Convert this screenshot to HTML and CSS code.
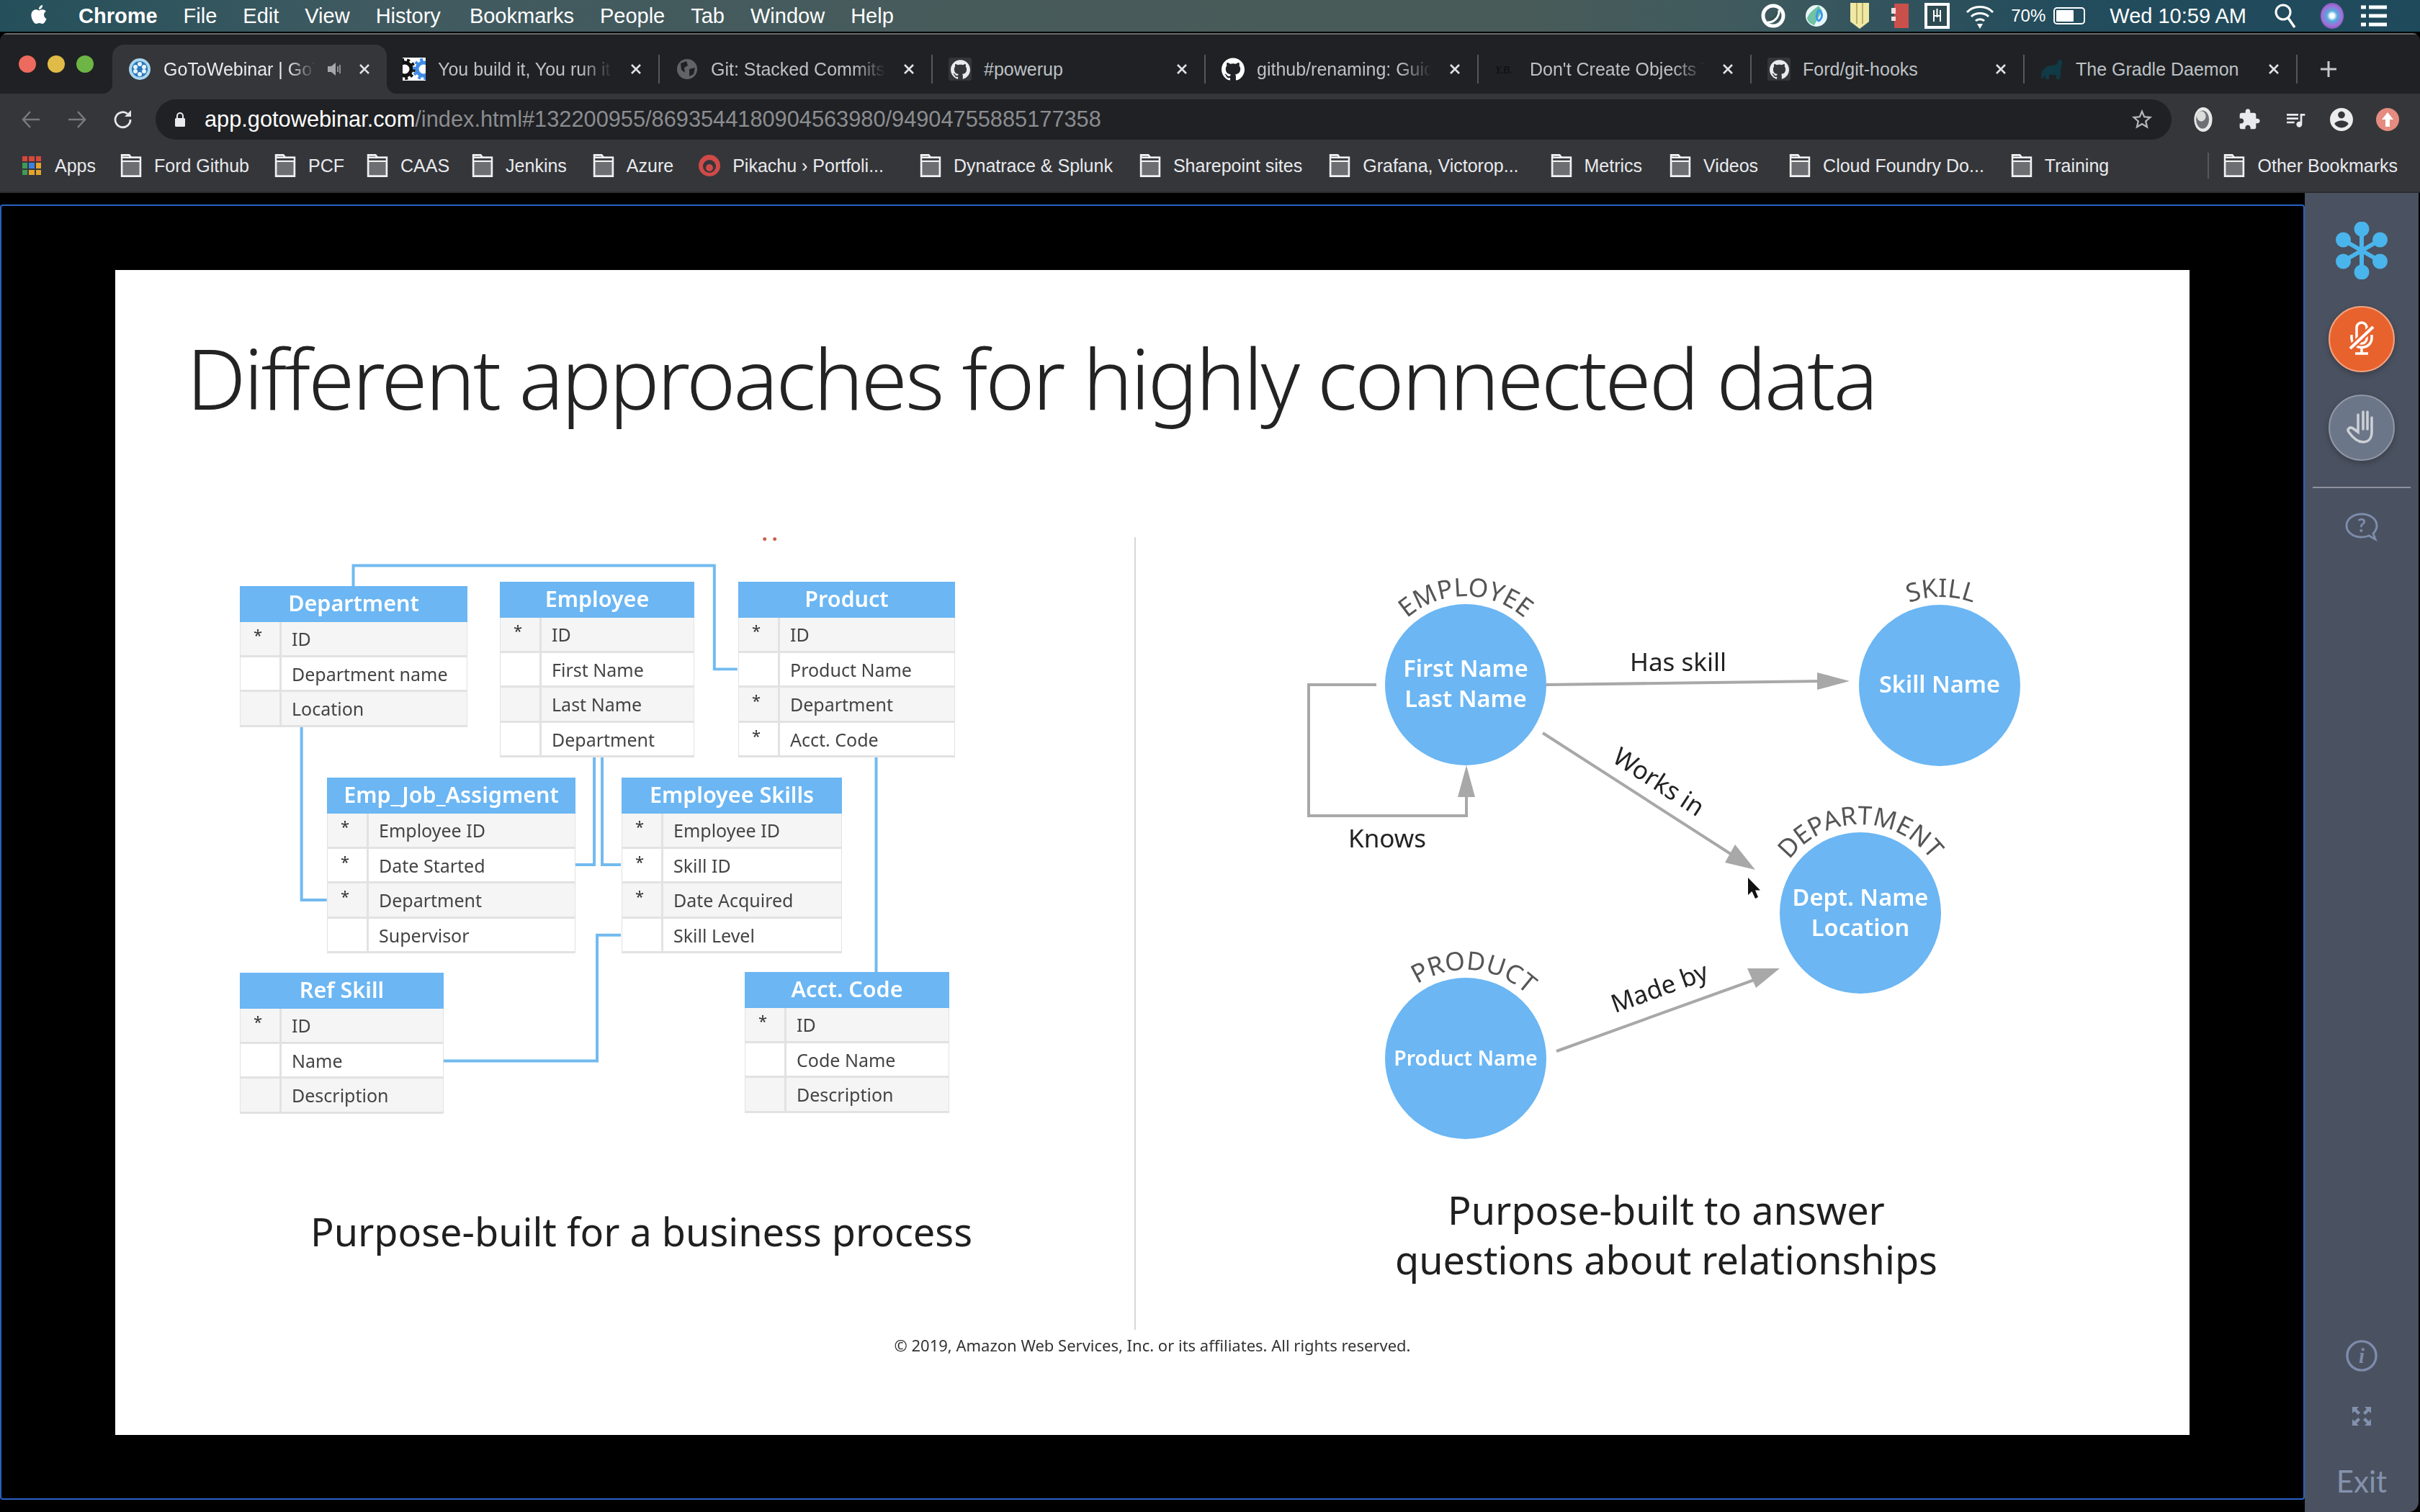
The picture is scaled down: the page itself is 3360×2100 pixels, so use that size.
FILE: index.html
```html
<!DOCTYPE html>
<html lang="en">
<head>
  <meta charset="UTF-8">
  <title>GoToWebinar</title>
  <link rel="stylesheet" href="styles.css">
</head>
<body>
  <svg class="defs" width="0" height="0">
    <symbol id="folder" viewBox="0 0 32 36">
      <path d="M1.5 34.5V1.5H13L16 5.5H30.5V34.5Z" fill="#6d6e71" stroke="#f1f1f1" stroke-width="3"/>
      <path d="M1.5 5.5H30.5V11H1.5Z" fill="#35363a" stroke="#f1f1f1" stroke-width="2.5"/>
    </symbol>
    <symbol id="github" viewBox="0 0 24 24">
      <path fill="currentColor" d="M12 .297c-6.63 0-12 5.373-12 12 0 5.303 3.438 9.8 8.205 11.385.6.113.82-.258.82-.577 0-.285-.01-1.04-.015-2.04-3.338.724-4.042-1.61-4.042-1.61C4.422 18.07 3.633 17.7 3.633 17.7c-1.087-.744.084-.729.084-.729 1.205.084 1.838 1.236 1.838 1.236 1.07 1.835 2.809 1.305 3.495.998.108-.776.417-1.305.76-1.605-2.665-.3-5.466-1.332-5.466-5.93 0-1.31.465-2.38 1.235-3.22-.135-.303-.54-1.523.105-3.176 0 0 1.005-.322 3.3 1.23.96-.267 1.98-.399 3-.405 1.02.006 2.04.138 3 .405 2.28-1.552 3.285-1.23 3.285-1.23.645 1.653.24 2.873.12 3.176.765.84 1.23 1.91 1.23 3.22 0 4.61-2.805 5.625-5.475 5.92.42.36.81 1.096.81 2.22 0 1.606-.015 2.896-.015 3.286 0 .315.21.69.825.57C20.565 22.092 24 17.592 24 12.297c0-6.627-5.373-12-12-12"/>
    </symbol>
    <symbol id="close" viewBox="0 0 16 16">
      <path d="M2 2L14 14M14 2L2 14" stroke="currentColor" stroke-width="2.6" fill="none"/>
    </symbol>
  </svg>

  <!-- mac menu bar -->
  <header class="menubar">
    <svg class="apple" viewBox="0 0 24 24"><path fill="#fff" d="M12.152 6.896c-.948 0-2.415-1.078-3.96-1.04-2.04.027-3.91 1.183-4.961 3.014-2.117 3.675-.546 9.103 1.519 12.09 1.013 1.454 2.208 3.09 3.792 3.039 1.52-.065 2.09-.987 3.935-.987 1.831 0 2.35.987 3.96.948 1.637-.026 2.676-1.48 3.676-2.948 1.156-1.688 1.636-3.325 1.662-3.415-.039-.013-3.182-1.221-3.22-4.857-.026-3.04 2.48-4.494 2.597-4.559-1.429-2.09-3.623-2.324-4.39-2.376-2-.156-3.675 1.09-4.61 1.09zM15.53 3.83c.843-1.012 1.4-2.427 1.245-3.83-1.207.052-2.662.805-3.532 1.818-.78.896-1.454 2.338-1.273 3.714 1.338.104 2.715-.688 3.559-1.701"/></svg>
    <nav class="menu">
      <b>Chrome</b><span>File</span><span>Edit</span><span>View</span><span>History</span><span>Bookmarks</span><span>People</span><span>Tab</span><span>Window</span><span>Help</span>
    </nav>
    <div class="status">
      <svg class="st st1" viewBox="0 0 34 34"><circle cx="17" cy="17" r="14" fill="none" stroke="#fff" stroke-width="5"/><path d="M9 26C17 27 26 19 25 9" fill="none" stroke="#fff" stroke-width="3"/><path d="M12 22C18 22 22 17 22 11" fill="none" stroke="#33504f" stroke-width="2"/></svg>
      <svg class="st st2" viewBox="0 0 34 34"><circle cx="17" cy="17" r="15" fill="#e9f6f7"/><path d="M4 20C9 10 14 8 20 3L25 10L14 30C8 28 5 25 4 20Z" fill="#6fc2a4"/><path d="M20 9C26 12 26 20 20 24C16 22 17 14 20 9Z" fill="none" stroke="#3d9bea" stroke-width="3"/></svg>
      <svg class="st st3" viewBox="0 0 28 38"><path d="M1 1H27V27L14 37L1 27Z" fill="#f1e8a4"/><path d="M10 1V30M18 1V30" stroke="#b9b26a" stroke-width="2"/></svg>
      <svg class="st st4" viewBox="0 0 26 38"><path d="M5 2H25V36H5Z" fill="#c9504b"/><path d="M1 8H7V16H1ZM1 20H7V26H1Z" fill="#f3dcdc"/></svg>
      <svg class="st st5" viewBox="0 0 35 36"><rect width="35" height="36" fill="#fff"/><rect x="4" y="4" width="27" height="28" fill="#2d4a50"/><path d="M13 10V26M22 10V26M13 18H22M17.500 8V20" stroke="#fff" stroke-width="2" fill="none"/></svg>
      <svg class="st st6" viewBox="0 0 42 36"><path d="M3 13C12 3 30 3 39 13M9 19C15 13 27 13 33 19M15 25C18 22 24 22 27 25" fill="none" stroke="#fff" stroke-width="3"/><path d="M21 36L17 29H25Z" fill="#fff"/></svg>
      <span class="st-pct">70%</span>
      <div class="battery"><i></i></div>
      <span class="st-clock">Wed 10:59 AM</span>
      <svg class="st st7" viewBox="0 0 30 34"><circle cx="12" cy="12" r="10" fill="none" stroke="#fff" stroke-width="3"/><path d="M19 20L28 33" stroke="#fff" stroke-width="3.4"/></svg>
      <div class="siri"></div>
      <svg class="st st8" viewBox="0 0 38 30"><path d="M1 3H8M12 3H37M1 15H8M12 15H37M1 27H8M12 27H37" stroke="#fff" stroke-width="5"/></svg>
    </div>
  </header>

  <div class="window">
    <div class="tabstrip">
      <div class="lights"><i class="red"></i><i class="yellow"></i><i class="green"></i></div>

      <div class="tab active">
        <svg class="fav" viewBox="0 0 32 32"><circle cx="16" cy="16" r="15" fill="#a9d6ee"/><circle cx="16" cy="16" r="11" fill="#2a78bb"/><g fill="#e6f3fa"><circle cx="16" cy="9" r="3"/><circle cx="16" cy="23" r="3"/><circle cx="10" cy="13" r="3"/><circle cx="22" cy="13" r="3"/><circle cx="10" cy="19" r="3"/><circle cx="22" cy="19" r="3"/></g></svg>
        <span class="tab-title short">GoToWebinar | GoT</span>
        <svg class="speaker" viewBox="0 0 20 24"><path d="M1 8H6L12 3V21L6 16H1Z" fill="#a5a7aa"/><path d="M15 8V16M18 6V18" stroke="#a5a7aa" stroke-width="1.6"/></svg>
        <svg class="tab-x"><use href="#close"/></svg>
      </div>
      <div class="tab">
        <svg class="fav" viewBox="0 0 32 32"><rect width="32" height="32" fill="#fff"/><circle cx="3" cy="16" r="9" fill="none" stroke="#111" stroke-width="5"/><circle cx="3" cy="16" r="13" fill="none" stroke="#111" stroke-width="4" stroke-dasharray="4 4"/><circle cx="29" cy="16" r="9" fill="none" stroke="#3f8be8" stroke-width="5"/><circle cx="29" cy="16" r="13" fill="none" stroke="#3f8be8" stroke-width="4" stroke-dasharray="4 4"/></svg>
        <span class="tab-title">You build it, You run it</span>
        <svg class="tab-x"><use href="#close"/></svg>
      </div>
      <i class="tab-sep"></i>
      <div class="tab">
        <svg class="fav" viewBox="0 0 32 32"><circle cx="16" cy="16" r="14" fill="#606367"/><path d="M7 8L15 5L17 11L12 14L13 21L8 17ZM19 16L27 14L25 23L19 26Z" fill="#202124"/></svg>
        <span class="tab-title">Git: Stacked Commits</span>
        <svg class="tab-x"><use href="#close"/></svg>
      </div>
      <i class="tab-sep"></i>
      <div class="tab">
        <span class="fav gh-box"><svg><use href="#github"/></svg></span>
        <span class="tab-title plain">#powerup</span>
        <svg class="tab-x"><use href="#close"/></svg>
      </div>
      <i class="tab-sep"></i>
      <div class="tab">
        <svg class="fav gh"><use href="#github"/></svg>
        <span class="tab-title">github/renaming: Guid</span>
        <svg class="tab-x"><use href="#close"/></svg>
      </div>
      <i class="tab-sep"></i>
      <div class="tab">
        <svg class="fav" viewBox="0 0 32 32"><text class="yb" x="1" y="22">Y.B.</text></svg>
        <span class="tab-title">Don't Create Objects T</span>
        <svg class="tab-x"><use href="#close"/></svg>
      </div>
      <i class="tab-sep"></i>
      <div class="tab">
        <span class="fav gh-box"><svg><use href="#github"/></svg></span>
        <span class="tab-title plain">Ford/git-hooks</span>
        <svg class="tab-x"><use href="#close"/></svg>
      </div>
      <i class="tab-sep"></i>
      <div class="tab">
        <svg class="fav" viewBox="0 0 32 32"><path d="M1 30C0 18 6 11 16 11C21 11 24 8 25 3C30 2 32 7 29 11C28 20 28 26 27 30H22V24H12V30H7V25C5 26 3 28 1 30Z" fill="#0f3a46"/></svg>
        <span class="tab-title plain">The Gradle Daemon</span>
        <svg class="tab-x"><use href="#close"/></svg>
      </div>
      <i class="tab-sep"></i>
      <svg class="tab-new" viewBox="0 0 24 24"><path d="M12 1V23M1 12H23" stroke="#c6c8cb" stroke-width="3"/></svg>
    </div>

    <div class="toolbar">
      <button class="nav-btn"><svg viewBox="0 0 28 28"><path d="M26 14H3M13 3L3 14L13 25" fill="none" stroke="#77797d" stroke-width="2.6"/></svg></button>
      <button class="nav-btn"><svg viewBox="0 0 28 28"><path d="M2 14H25M15 3L25 14L15 25" fill="none" stroke="#77797d" stroke-width="2.6"/></svg></button>
      <button class="nav-btn"><svg viewBox="0 0 28 28"><path d="M24 14A10.500 10.500 0 1 1 20 6" fill="none" stroke="#e4e6e8" stroke-width="2.8"/><path d="M25 1V10H16Z" fill="#e4e6e8"/></svg></button>
      <div class="omnibox">
        <svg class="lock" viewBox="0 0 16 22"><path d="M4 9V6A4 4 0 0 1 12 6V9" fill="none" stroke="#e8eaed" stroke-width="2"/><rect x="1" y="9" width="14" height="12" rx="1.500" fill="#e8eaed"/></svg>
        <span class="url"><b>app.gotowebinar.com</b>/index.html#132200955/8693544180904563980/94904755885177358</span>
        <svg class="star" viewBox="0 0 24 24"><path fill="#b4b6b9" d="M22 9.24l-7.19-.62L12 2 9.19 8.63 2 9.24l5.46 4.730L5.820 21 12 17.270 18.180 21l-1.630-7.030L22 9.240zM12 15.400l-3.760 2.270 1-4.280-3.320-2.880 4.380-.38L12 6.100l1.710 4.040 4.380.38-3.320 2.880 1 4.280L12 15.400z"/></svg>
      </div>
      <div class="tool-icons">
        <svg viewBox="0 0 32 40"><ellipse cx="16" cy="20" rx="14" ry="19" fill="#e8e8e8"/><ellipse cx="15" cy="20" rx="10" ry="14" fill="#6f7073"/><ellipse cx="13" cy="15" rx="7" ry="8" fill="#dcdcdc"/></svg>
        <svg viewBox="0 0 24 24"><path fill="#e8eaed" d="M20.500 11H19V7c0-1.100-.9-2-2-2h-4V3.500C13 2.120 11.880 1 10.500 1S8 2.120 8 3.500V5H4c-1.100 0-1.990.9-1.990 2v3.800H3.500c1.490 0 2.700 1.210 2.700 2.700s-1.210 2.700-2.700 2.700H2V20c0 1.100.9 2 2 2h3.800v-1.500c0-1.490 1.210-2.700 2.700-2.700 1.490 0 2.700 1.210 2.700 2.700V22H17c1.100 0 2-.9 2-2v-4h1.500c1.380 0 2.500-1.120 2.500-2.500S21.880 11 20.500 11z"/></svg>
        <svg viewBox="0 0 24 24"><path fill="#e8eaed" d="M15 6H3v2h12V6zm0 4H3v2h12v-2zM3 16h8v-2H3v2zM17 6v8.180c-.31-.11-.65-.18-1-.18-1.660 0-3 1.340-3 3s1.340 3 3 3 3-1.340 3-3V8h3V6h-5z"/></svg>
        <svg viewBox="2 2 20 20" class="avatar"><path fill="#ececec" d="M12 2C6.480 2 2 6.480 2 12s4.480 10 10 10 10-4.480 10-10S17.520 2 12 2zm0 3c1.660 0 3 1.340 3 3s-1.340 3-3 3-3-1.340-3-3 1.340-3 3-3zm0 14.200c-2.500 0-4.710-1.280-6-3.220.03-1.990 4-3.080 6-3.080 1.990 0 5.970 1.090 6 3.080-1.290 1.940-3.500 3.220-6 3.220z"/></svg>
        <svg viewBox="0 0 32 32" class="update"><circle cx="16" cy="16" r="16" fill="#e58b80"/><path d="M16 6L24 16H19V26H13V16H8Z" fill="#fff"/></svg>
      </div>
    </div>

    <div class="bookmarks">
      <div class="bm">
        <div class="apps-grid"><i class="r"></i><i class="r"></i><i class="r"></i><i class="g"></i><i class="b"></i><i class="y"></i><i class="g"></i><i class="y"></i><i class="y"></i></div>
        <span>Apps</span>
      </div>
      <div class="bm"><svg class="folder"><use href="#folder"/></svg><span>Ford Github</span></div>
      <div class="bm"><svg class="folder"><use href="#folder"/></svg><span>PCF</span></div>
      <div class="bm"><svg class="folder"><use href="#folder"/></svg><span>CAAS</span></div>
      <div class="bm"><svg class="folder"><use href="#folder"/></svg><span>Jenkins</span></div>
      <div class="bm"><svg class="folder"><use href="#folder"/></svg><span>Azure</span></div>
      <div class="bm">
        <svg class="folder" viewBox="0 0 32 32"><circle cx="16" cy="16" r="15" fill="#cf4a48"/><circle cx="16" cy="17" r="9" fill="#35363a"/><circle cx="16" cy="19" r="5" fill="#cf4a48"/></svg>
        <span>Pikachu › Portfoli...</span>
      </div>
      <div class="bm"><svg class="folder"><use href="#folder"/></svg><span>Dynatrace &amp; Splunk</span></div>
      <div class="bm"><svg class="folder"><use href="#folder"/></svg><span>Sharepoint sites</span></div>
      <div class="bm"><svg class="folder"><use href="#folder"/></svg><span>Grafana, Victorop...</span></div>
      <div class="bm"><svg class="folder"><use href="#folder"/></svg><span>Metrics</span></div>
      <div class="bm"><svg class="folder"><use href="#folder"/></svg><span>Videos</span></div>
      <div class="bm"><svg class="folder"><use href="#folder"/></svg><span>Cloud Foundry Do...</span></div>
      <div class="bm"><svg class="folder"><use href="#folder"/></svg><span>Training</span></div>
      <div class="bm other"><svg class="folder"><use href="#folder"/></svg><span>Other Bookmarks</span></div>
    </div>

    <div class="webinar">
      <main class="stage">
        <section class="slide">
          <h1>Different approaches for highly connected data</h1>
          <div class="panels">
            <div class="panel">
              <div class="canvas left-canvas">
                <svg class="lines" viewBox="160 746 1417 900">
                  <g class="conn">
                    <path d="M491 814V785H993V929H1025"/>
                    <path d="M419 1009V1250H454"/>
                    <path d="M826 1051V1201H799"/>
                    <path d="M837 1051V1201H863"/>
                    <path d="M1218 1049V1351"/>
                    <path d="M616 1474H830V1299H863"/>
                  </g>
                  <circle class="speck" cx="1063" cy="748" r="2.500"/>
                  <circle class="speck" cx="1077" cy="748" r="2.500"/>
                </svg>

                <div class="tbl t-dept">
                  <div class="tbl-head">Department</div>
                  <div class="tbl-row"><span class="key">*</span><span class="col">ID</span></div>
                  <div class="tbl-row"><span class="key"></span><span class="col">Department name</span></div>
                  <div class="tbl-row"><span class="key"></span><span class="col">Location</span></div>
                </div>
                <div class="tbl t-emp">
                  <div class="tbl-head">Employee</div>
                  <div class="tbl-row"><span class="key">*</span><span class="col">ID</span></div>
                  <div class="tbl-row"><span class="key"></span><span class="col">First Name</span></div>
                  <div class="tbl-row"><span class="key"></span><span class="col">Last Name</span></div>
                  <div class="tbl-row"><span class="key"></span><span class="col">Department</span></div>
                </div>
                <div class="tbl t-prod">
                  <div class="tbl-head">Product</div>
                  <div class="tbl-row"><span class="key">*</span><span class="col">ID</span></div>
                  <div class="tbl-row"><span class="key"></span><span class="col">Product Name</span></div>
                  <div class="tbl-row"><span class="key">*</span><span class="col">Department</span></div>
                  <div class="tbl-row"><span class="key">*</span><span class="col">Acct. Code</span></div>
                </div>
                <div class="tbl t-job">
                  <div class="tbl-head">Emp_Job_Assigment</div>
                  <div class="tbl-row"><span class="key">*</span><span class="col">Employee ID</span></div>
                  <div class="tbl-row"><span class="key">*</span><span class="col">Date Started</span></div>
                  <div class="tbl-row"><span class="key">*</span><span class="col">Department</span></div>
                  <div class="tbl-row"><span class="key"></span><span class="col">Supervisor</span></div>
                </div>
                <div class="tbl t-skills">
                  <div class="tbl-head">Employee Skills</div>
                  <div class="tbl-row"><span class="key">*</span><span class="col">Employee ID</span></div>
                  <div class="tbl-row"><span class="key">*</span><span class="col">Skill ID</span></div>
                  <div class="tbl-row"><span class="key">*</span><span class="col">Date Acquired</span></div>
                  <div class="tbl-row"><span class="key"></span><span class="col">Skill Level</span></div>
                </div>
                <div class="tbl t-ref">
                  <div class="tbl-head">Ref Skill</div>
                  <div class="tbl-row"><span class="key">*</span><span class="col">ID</span></div>
                  <div class="tbl-row"><span class="key"></span><span class="col">Name</span></div>
                  <div class="tbl-row"><span class="key"></span><span class="col">Description</span></div>
                </div>
                <div class="tbl t-acct">
                  <div class="tbl-head">Acct. Code</div>
                  <div class="tbl-row"><span class="key">*</span><span class="col">ID</span></div>
                  <div class="tbl-row"><span class="key"></span><span class="col">Code Name</span></div>
                  <div class="tbl-row"><span class="key"></span><span class="col">Description</span></div>
                </div>
              </div>
              <p class="caption left-caption">Purpose-built for a business process</p>
            </div>

            <div class="panel right-panel">
              <div class="canvas">
                <svg class="lines" viewBox="1577 746 1461 900">
                  <defs>
                    <path id="arc-emp" d="M1911 951A123 123 0 0 1 2157 951"/>
                    <path id="arc-skill" d="M2571 952A123 123 0 0 1 2817 952"/>
                    <path id="arc-dept" d="M2459 1268A123 123 0 0 1 2705 1268"/>
                    <path id="arc-prod" d="M1911 1470A123 123 0 0 1 2157 1470"/>
                  </defs>
                  <g class="edge">
                    <path d="M2146 951L2530 946"/>
                    <path d="M1910 951H1816V1133H2035V1100"/>
                    <path d="M2141 1018L2405 1188"/>
                    <path d="M2160 1460L2440 1359"/>
                  </g>
                  <g class="head">
                    <path d="M2567 946L2522 934V958Z"/>
                    <path d="M2035 1063L2023 1107H2047Z"/>
                    <path d="M2436 1208L2394 1198L2408 1173Z"/>
                    <path d="M2470 1345L2437 1372L2425 1345Z"/>
                  </g>
                  <circle class="node" cx="2034" cy="951" r="112"/>
                  <circle class="node" cx="2692" cy="952" r="112"/>
                  <circle class="node" cx="2582" cy="1268" r="112"/>
                  <circle class="node" cx="2034" cy="1470" r="112"/>

                  <text class="arc-label"><textPath href="#arc-emp" startOffset="50%">EMPLOYEE</textPath></text>
                  <text class="arc-label"><textPath href="#arc-skill" startOffset="50%">SKILL</textPath></text>
                  <text class="arc-label"><textPath href="#arc-dept" startOffset="50%">DEPARTMENT</textPath></text>
                  <text class="arc-label"><textPath href="#arc-prod" startOffset="53%">PRODUCT</textPath></text>

                  <text class="node-text" x="2034" y="940">First Name</text>
                  <text class="node-text" x="2034" y="982">Last Name</text>
                  <text class="node-text" x="2692" y="962">Skill Name</text>
                  <text class="node-text" x="2582" y="1258">Dept. Name</text>
                  <text class="node-text" x="2582" y="1300">Location</text>
                  <text class="node-text small" x="2034" y="1480">Product Name</text>

                  <text class="edge-label" x="2329" y="932">Has skill</text>
                  <text class="edge-label" x="1925" y="1177">Knows</text>
                  <text class="edge-label" transform="translate(2302 1086) rotate(33)" y="12">Works in</text>
                  <text class="edge-label" transform="translate(2303 1372) rotate(-20)" y="12">Made by</text>

                  <path class="pointer" d="M2426 1219V1243L2431.500 1238L2436 1248L2440 1246L2436 1236.500H2443Z"/>
                </svg>
              </div>
              <p class="caption">Purpose-built to answer<br>questions about relationships</p>
            </div>
          </div>
          <p class="legal">© 2019, Amazon Web Services, Inc. or its affiliates. All rights reserved.</p>
        </section>
      </main>

      <aside class="sidebar">
        <svg class="logo" viewBox="0 0 72 80">
          <g stroke="#4ab5ec" stroke-width="6"><path d="M36 10V70M10 25L62 55M62 25L10 55"/></g>
          <g fill="#4ab5ec"><circle cx="36" cy="10" r="10.500"/><circle cx="36" cy="70" r="10.500"/><circle cx="10.500" cy="25" r="10.500"/><circle cx="61.500" cy="25" r="10.500"/><circle cx="10.500" cy="55" r="10.500"/><circle cx="61.500" cy="55" r="10.500"/></g>
        </svg>
        <button class="round mic">
          <svg viewBox="-30 -30 60 60">
            <rect x="-7" y="-23" width="14" height="29" rx="7" fill="none" stroke="#fff" stroke-width="3.500"/>
            <path d="M-14 -6V-2C-14 16 14 16 14 -2V-6M0 12V19M-9 20H9" fill="none" stroke="#fff" stroke-width="3.500"/>
            <path d="M-16 13L16 -17" stroke="#e8622e" stroke-width="9"/>
            <path d="M-16 13L16 -17" stroke="#fff" stroke-width="4"/>
          </svg>
        </button>
        <button class="round hand">
          <svg viewBox="-30 -30 60 60">
            <path d="M-5 -18V6L-12 1C-16 -2 -21 2 -18 6C-13 13 -7 20 2 20C10 20 14 14 14 6V-14M2 -22V2M8 -22V2" fill="none" stroke="#cdd0d5" stroke-width="3.500" stroke-linecap="round"/>
          </svg>
        </button>
        <hr class="side-line">
        <svg class="help" viewBox="0 0 46 40">
          <path d="M23 2C11 2 2 9 2 18C2 27 11 34 23 34C27 34 31 33 33 32L42 37L39 29C42 26 44 22 44 18C44 9 35 2 23 2Z" fill="none" stroke="#7d8cab" stroke-width="3"/>
          <text class="help-mark" x="23" y="27">?</text>
        </svg>
        <svg class="info" viewBox="0 0 46 46">
          <circle cx="23" cy="23" r="21" fill="none" stroke="#7d8cab" stroke-width="3.500"/>
          <text class="info-mark" x="23" y="33">i</text>
        </svg>
        <svg class="expand" viewBox="0 0 30 30">
          <path d="M2 2H11L8 5L13 10L10 13L5 8L2 11ZM28 2H19L22 5L17 10L20 13L25 8L28 11ZM2 28H11L8 25L13 20L10 17L5 22L2 19ZM28 28H19L22 25L17 20L20 17L25 22L28 19Z" fill="#8292ae"/>
        </svg>
        <span class="exit">Exit</span>
      </aside>
    </div>
  </div>
</body>
</html>
```

FILE: styles.css
```css
* {
  box-sizing: border-box;
}
html, body {
  margin: 0;
  padding: 0;
}
body {
  width: 3360px;
  height: 2100px;
  overflow: hidden;
  background: #000;
  font-family: 'Liberation Sans', sans-serif;
  display: flex;
  flex-direction: column;
}
.defs {
  position: absolute;
}

/* menu bar */
.menubar {
  height: 44px;
  flex: none;
  display: flex;
  align-items: center;
  color: #fff;
  font-size: 29px;
  background: linear-gradient(90deg, #24505b 0%, #3f5a60 15%, #485b5b 40%, #495b58 62%, #3f5a5e 72%, #234c5c 85%, #1f4a5c 100%);
  padding: 0 45px 0 41px;
}
.apple {
  width: 26px;
  height: 30px;
  margin-top: -4px;
}
.menu {
  display: flex;
  gap: 36px;
  margin-left: 42px;
}
.menu b {
  font-weight: 700;
}
.menu span:nth-child(5) {
  margin-right: 4px;
}
.status {
  margin-left: auto;
  display: flex;
  align-items: center;
  height: 100%;
}
.st {
  flex: none;
  height: 34px;
}
.st1 { width: 34px; }
.st2 { width: 34px; margin-left: 26px; }
.st3 { width: 28px; height: 38px; margin-left: 29px; }
.st4 { width: 26px; height: 38px; margin-left: 29px; }
.st5 { width: 35px; height: 36px; margin-left: 21px; }
.st6 { width: 42px; height: 36px; margin-left: 21px; }
.st-pct {
  font-size: 24px;
  margin-left: 22px;
}
.battery {
  width: 44px;
  height: 24px;
  margin-left: 11px;
  border: 2px solid #fff;
  border-radius: 5px;
  padding: 2px;
}
.battery i {
  display: block;
  width: 65%;
  height: 100%;
  background: #fff;
  border-radius: 1px;
}
.st-clock {
  margin-left: 34px;
  white-space: nowrap;
}
.st7 { width: 30px; margin-left: 39px; }
.siri {
  width: 32px;
  height: 36px;
  margin-left: 34px;
  border-radius: 50%;
  background: radial-gradient(circle at 50% 50%, #fff 0 12%, #5ad 30%, #a56ad8 60%, #334a86 100%);
}
.st8 { width: 38px; height: 30px; margin-left: 23px; }

/* browser window */
.window {
  flex: 1;
  margin-top: 2px;
  display: flex;
  flex-direction: column;
  border-radius: 10px 10px 0 0;
  overflow: hidden;
  min-height: 0;
}
.tabstrip {
  height: 84px;
  flex: none;
  background: #202124;
  border-top: 2px solid #6a6a6a;
  padding: 14px 0 0 26px;
  display: flex;
  align-items: center;
}
.lights {
  display: flex;
  gap: 16px;
  width: 130px;
  margin-bottom: 14px;
}
.lights i {
  width: 24px;
  height: 24px;
  border-radius: 50%;
}
.lights .red { background: #ec6a5e; }
.lights .yellow { background: #e0bb47; }
.lights .green { background: #6db544; }
.tab {
  width: 377px;
  height: 68px;
  flex: none;
  display: flex;
  align-items: center;
  padding: 0 23px 0 22px;
  color: #bdc1c6;
  font-size: 25px;
  position: relative;
}
.tab.active {
  width: 381px;
  background: #35363a;
  border-radius: 16px 16px 0 0;
  color: #e8eaed;
}
.tab.active::before,
.tab.active::after {
  content: "";
  position: absolute;
  bottom: 0;
  width: 14px;
  height: 14px;
}
.tab.active::before {
  left: -14px;
  background: radial-gradient(circle at 0 0, transparent 14px, #35363a 14.500px);
}
.tab.active::after {
  right: -14px;
  background: radial-gradient(circle at 100% 0, transparent 14px, #35363a 14.500px);
}
.tab-sep {
  flex: none;
  width: 2px;
  height: 40px;
  background: #56575b;
}
.fav {
  width: 32px;
  height: 32px;
  flex: none;
}
.fav.gh {
  color: #fff;
}
.gh-box {
  background: #35363a;
  border-radius: 3px;
  display: flex;
  align-items: center;
  justify-content: center;
  color: #e8eaed;
}
.gh-box svg {
  width: 27px;
  height: 27px;
}
.yb {
  font-family: 'Liberation Serif', serif;
  font-size: 15px;
  font-style: italic;
  fill: #0c0c0d;
}
.tab-title {
  flex: 1;
  min-width: 0;
  margin: 0 24px 0 17px;
  white-space: nowrap;
  -webkit-mask-image: linear-gradient(90deg, #000 82%, transparent 100%);
  mask-image: linear-gradient(90deg, #000 82%, transparent 100%);
}
.tab-title.plain {
  -webkit-mask-image: none;
  mask-image: none;
}
.tab-title.short {
  margin-right: 16px;
}
.speaker {
  width: 20px;
  height: 24px;
  flex: none;
  margin-right: 24px;
}
.tab-x {
  width: 16px;
  height: 16px;
  flex: none;
  color: #e0e2e4;
}
.tab-new {
  width: 24px;
  height: 24px;
  margin-left: 31px;
}

/* toolbar */
.toolbar {
  height: 64px;
  flex: none;
  background: #35363a;
  padding: 8px 13px 0 11px;
  display: flex;
  align-items: center;
}
.nav-btn {
  width: 64px;
  height: 56px;
  flex: none;
  padding: 0;
  border: 0;
  background: none;
  display: flex;
  align-items: center;
  justify-content: center;
}
.nav-btn svg {
  width: 28px;
  height: 28px;
}
.omnibox {
  flex: 1;
  height: 56px;
  margin: 0 12px 0 13px;
  background: #202124;
  border-radius: 28px;
  display: flex;
  align-items: center;
  padding: 0 24px 0 26px;
}
.lock {
  width: 16px;
  height: 22px;
}
.url {
  margin-left: 26px;
  font-size: 30.750px;
  color: #8b8d91;
  white-space: nowrap;
}
.url b {
  font-weight: 400;
  color: #fff;
}
.star {
  width: 34px;
  height: 34px;
  margin-left: auto;
}
.tool-icons {
  display: flex;
  align-items: center;
  gap: 32px;
  width: 320px;
  padding-left: 16px;
}
.tool-icons svg {
  width: 32px;
  height: 36px;
  flex: none;
}

/* bookmarks */
.bookmarks {
  height: 74px;
  flex: none;
  background: #35363a;
  display: flex;
  align-items: center;
  gap: 34px;
  padding: 0 31px 0 31px;
  color: #e8eaed;
  font-size: 25px;
  border-bottom: 2px solid #2b2c2f;
}
.bm {
  display: flex;
  align-items: center;
  gap: 16px;
  white-space: nowrap;
}
/* the originals sit in wider slots than the text needs here */
.bm:nth-child(2) { margin-left: -1px; }
.bm:nth-child(4) { margin-left: -4px; }
.bm:nth-child(5) { margin-left: -4px; }
.bm:nth-child(6) { margin-left: 1px; }
.bm:nth-child(8) { margin-left: 15px; }
.bm:nth-child(9) { margin-left: 2px; }
.bm:nth-child(10) { margin-left: 2px; }
.bm:nth-child(11) { margin-left: 9px; }
.bm:nth-child(12) { margin-left: 3px; }
.bm:nth-child(13) { margin-left: 8px; }
.bm:nth-child(14) { margin-left: 2px; }
.bm.other {
  margin-left: auto;
  position: relative;
}
.bm.other::before {
  content: "";
  position: absolute;
  left: -21px;
  top: -2px;
  width: 2px;
  height: 36px;
  background: #56575b;
}
.folder {
  width: 32px;
  height: 32px;
  flex: none;
}
.apps-grid {
  width: 26px;
  height: 27px;
  display: grid;
  grid-template-columns: repeat(3, 1fr);
  grid-template-rows: repeat(3, 1fr);
  gap: 2px;
  margin-right: 3px;
}
.apps-grid .r { background: #d8483c; }
.apps-grid .g { background: #3f9a56; }
.apps-grid .b { background: #3f7fe0; }
.apps-grid .y { background: #e3a32d; }

/* webinar area */
.webinar {
  flex: 1;
  display: flex;
  min-height: 0;
  background: #000;
}
.stage {
  width: 3200px;
  height: 1799px;
  margin-top: 16px;
  flex: none;
  border: 2px solid #2a62c4;
  border-radius: 4px;
  padding: 89px 0 0 158px;
}
.sidebar {
  width: 158px;
  flex: none;
  background: #4a5160;
  border-radius: 0 0 14px 0;
  display: flex;
  flex-direction: column;
  align-items: center;
}
.logo {
  width: 72px;
  height: 80px;
  margin-top: 40px;
}
.round {
  width: 92px;
  height: 92px;
  padding: 0;
  border-radius: 50%;
  display: flex;
  align-items: center;
  justify-content: center;
  box-shadow: 0 3px 8px rgba(0,0,0,0.25);
}
.round svg {
  width: 60px;
  height: 60px;
}
.mic {
  margin-top: 37px;
  background: #e8622e;
  border: 2px solid #f3a27e;
}
.hand {
  margin-top: 31px;
  background: #6b7688;
  border: 2px solid #8f97a5;
}
.side-line {
  width: 136px;
  height: 2px;
  margin: 36px 0 0;
  border: 0;
  background: #8e93a0;
}
.help {
  width: 46px;
  height: 40px;
  margin-top: 34px;
}
.help-mark {
  font-family: 'Lato', sans-serif;
  font-size: 26px;
  font-weight: 700;
  fill: #7d8cab;
  text-anchor: middle;
}
.info {
  width: 44px;
  height: 44px;
  margin-top: auto;
}
.info-mark {
  font-family: 'Liberation Serif', serif;
  font-size: 30px;
  font-weight: 700;
  font-style: italic;
  fill: #7d8cab;
  text-anchor: middle;
}
.expand {
  width: 30px;
  height: 30px;
  margin-top: 47px;
}
.exit {
  font-family: 'Lato', sans-serif;
  font-size: 42px;
  line-height: 50px;
  color: #8492ad;
  margin: 50px 0 18px;
}

/* slide */
.slide {
  width: 2880px;
  height: 1618px;
  background: #fff;
  display: flex;
  flex-direction: column;
  font-family: 'Noto Sans', sans-serif;
  color: #222;
  filter: blur(0.7px);
}
.slide h1 {
  margin: 0;
  height: 371px;
  padding: 79px 0 0 99px;
  font-size: 116px;
  line-height: 140px;
  font-weight: 300;
  letter-spacing: -3px;
  white-space: nowrap;
  color: #232323;
}
.panels {
  height: 1101px;
  flex: none;
  display: grid;
  grid-template-columns: 1417px 1fr;
}
.panel {
  border-right: 2px solid #d8d8d8;
}
.right-panel {
  border-right: 0;
}
.canvas {
  position: relative;
  height: 900px;
}
.lines {
  position: absolute;
  left: 0;
  top: 0;
  width: 100%;
  height: 100%;
}
.caption {
  margin: 0;
  font-size: 54px;
  line-height: 69px;
  text-align: center;
  color: #1f1f1f;
}
.left-caption {
  margin-top: 30px;
  padding-left: 46px;
}
.right-panel .caption {
  padding-left: 10px;
}
.legal {
  margin: 6px 0 0;
  font-size: 22px;
  line-height: 30px;
  text-align: center;
  color: #333;
}

/* er tables */
.tbl {
  position: absolute;
  display: grid;
  grid-template-rows: 50px;
  grid-auto-rows: 48.500px;
}
.t-dept { left: 173px; top: 68px; width: 316px; }
.t-emp { left: 534px; top: 62px; width: 270px; }
.t-prod { left: 865px; top: 62px; width: 301px; }
.t-job { left: 294px; top: 334px; width: 345px; }
.t-skills { left: 703px; top: 334px; width: 306px; }
.t-ref { left: 173px; top: 605px; width: 283px; }
.t-acct { left: 874px; top: 604px; width: 284px; }
.tbl-head {
  background: #6bb6f3;
  color: #fff;
  font-size: 30.500px;
  font-weight: 600;
  line-height: 47px;
  text-align: center;
}
.tbl-row {
  display: flex;
  background: #fff;
  color: #444;
  font-size: 25px;
  line-height: 46px;
  border: 1.500px solid #e2e2e2;
  border-top: 0;
  border-bottom-width: 3px;
}
.tbl-row:nth-child(even) {
  background: #f5f5f5;
}
.key {
  width: 57px;
  flex: none;
  border-right: 3px solid #e2e2e2;
  padding-left: 18px;
  font-size: 22px;
  line-height: 34px;
  color: #333;
}
.col {
  padding-left: 14px;
  white-space: nowrap;
}

/* connector and graph drawing */
.conn path {
  fill: none;
  stroke: #72baf0;
  stroke-width: 4;
}
.speck {
  fill: #c8604a;
}
.edge path {
  fill: none;
  stroke: #a8a8a8;
  stroke-width: 4;
}
.head path {
  fill: #a8a8a8;
}
.node {
  fill: #6bb6f3;
}
.node-text {
  font-size: 32.500px;
  font-weight: 600;
  fill: #fff;
  text-anchor: middle;
}
.node-text.small {
  font-size: 28.500px;
}
.edge-label {
  font-size: 35px;
  fill: #222;
  text-anchor: middle;
}
.arc-label {
  font-size: 35.500px;
  fill: #555;
  text-anchor: middle;
}
.pointer {
  fill: #111;
}
```
